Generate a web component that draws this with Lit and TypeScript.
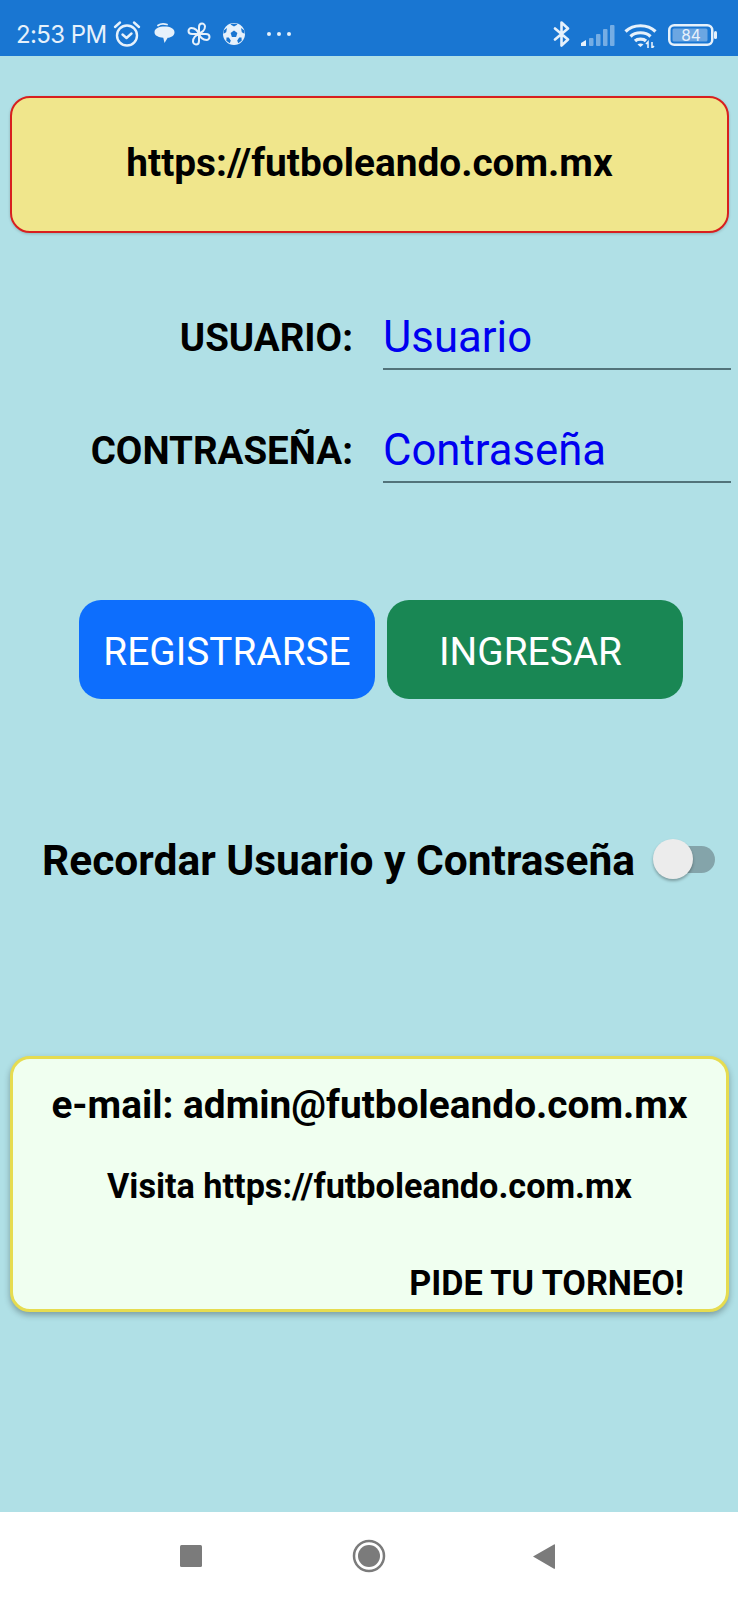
import { html, LitElement, css } from 'lit';
import { customElement } from 'lit/decorators.js';

@customElement(`app-root`)
export class AppRoot extends LitElement {
  static styles = css`
    :host {
      display: flex;
      flex-direction: column;
      width: 738px;
      height: 1600px;
      overflow: hidden;
      background: #b0e0e6;
      font-family: Roboto, sans-serif;
      color: #000;
    }
    .status {
      height: 56px;
      flex: none;
      background: #1976d2;
      color: #e6f1fb;
      display: flex;
      align-items: center;
      box-sizing: border-box;
      padding: 12px 21px 0 16px;
    }
    .status svg { display: block; flex: none; }
    .time { font-family: Inter, sans-serif; font-size: 24px; letter-spacing: -0.6px; width: 97px; white-space: nowrap; }
    .ic-chat { margin-left: 13px; }
    .ic-wheel { margin-left: 12px; }
    .ic-ball { margin-left: 12px; }
    .ic-dots { margin-left: 21px; }
    .spacer { flex: 1; }
    .ic-signal { margin-left: 10px; margin-top: 2px; }
    .ic-wifi { margin-left: 9px; margin-top: 2px; }
    .ic-batt { margin-left: 11px; margin-top: 2px; }
    .content { flex: 1; display: flex; flex-direction: column; padding: 40px 9px 0 10px; }
    .banner {
      height: 137px;
      box-sizing: border-box;
      background: #f0e68c;
      border: 2px solid #d81f1f;
      border-radius: 20px;
      padding-bottom: 4px;
      display: flex;
      align-items: center;
      justify-content: center;
      font-size: 38.8px;
      font-weight: 700;
      box-shadow: 0 1px 3px rgba(0, 0, 0, 0.2);
    }
    .row { display: flex; height: 77px; }
    .row.first { margin-top: 60px; }
    .row.second { margin-top: 36px; }
    .row label {
      flex: none;
      width: 343px;
      text-align: right;
      font-size: 38.5px;
      font-weight: 700;
      padding-top: 13px;
      line-height: 64px;
    }
    .field {
      flex: none;
      margin-left: 30px;
      width: 348px;
      box-sizing: border-box;
      height: 77px;
      padding-top: 13px;
      border-bottom: 2px solid #52737a;
      color: #0000f0;
      font-size: 43.7px;
      line-height: 62px;
    }
    .buttons { display: flex; gap: 12px; margin-top: 117px; margin-left: 69px; }
    .btn {
      width: 296px;
      height: 99px;
      box-sizing: border-box;
      padding-top: 4px;
      border-radius: 22px;
      color: #fff;
      font-size: 38.8px;
      display: flex;
      align-items: center;
      justify-content: center;
    }
    .btn.blue { background: #0d6efd; }
    .btn.green { background: #198754; padding-right: 9px; }
    .remember { display: flex; align-items: center; margin-top: 136px; padding-left: 32px; height: 48px; }
    .remember span { font-size: 42.5px; font-weight: 700; width: 611px; white-space: nowrap; padding-top: 2px; }
    .toggle { position: relative; width: 62px; height: 40px; flex: none; }
    .track { position: absolute; left: 10px; right: 0; top: 7px; height: 27px; border-radius: 14px; background: #84a4aa; }
    .thumb {
      position: absolute;
      left: 0;
      top: 0;
      width: 40px;
      height: 40px;
      border-radius: 50%;
      background: #ececec;
      box-shadow: 0 2px 3px rgba(0, 0, 0, 0.3);
    }
    .card {
      margin-top: 173px;
      height: 256px;
      box-sizing: border-box;
      background: #f0fff0;
      border: 3px solid #e6dc50;
      border-radius: 20px;
      box-shadow: 0 3px 6px rgba(0, 0, 0, 0.3);
      display: flex;
      flex-direction: column;
      align-items: center;
      font-weight: 700;
    }
    .mail { font-size: 38.8px; margin-top: 22px; line-height: 48px; }
    .visit { font-size: 34.2px; margin-top: 35px; line-height: 44px; }
    .ask { font-size: 34.2px; align-self: flex-end; margin: 53px 42px 0 0; line-height: 44px; }
    .nav {
      height: 88px;
      flex: none;
      background: #fff;
      display: flex;
      align-items: center;
      justify-content: center;
      padding-left: 6px;
    }
    .nav svg { display: block; }
  `;

  render() {
    return html`
      <div class="status">
        <div class="time">2:53 PM</div>
        <svg width="28" height="28" viewBox="0 0 28 28" fill="none" stroke="currentColor" stroke-width="2.4" stroke-linecap="round" stroke-linejoin="round">
          <circle cx="14" cy="15.5" r="10" />
          <path d="M9.500 14.500l4 3.500 5-4.500M2 7l5-4.500M26 7l-5-4.500" />
        </svg>
        <svg class="ic-chat" width="21" height="22" viewBox="0 0 21 22" fill="currentColor">
          <path d="M4 2.500C6 1 10 .7 13 1.500" fill="none" stroke="currentColor" stroke-width="1.800" stroke-linecap="round" />
          <path d="M10.500 3.500c5.500 0 10 1.800 10 5.700 0 3.400-3.300 5.300-6.800 5.600L10.500 20l-1.200-5.300C4.500 14.300.5 12.600.5 9.200c0-3.900 4.500-5.700 10-5.700z" />
        </svg>
        <svg class="ic-wheel" width="24" height="24" viewBox="0 0 24 24" fill="none" stroke="currentColor" stroke-width="2" stroke-linejoin="round">
          <path d="M12 11.500V5c0-2.200 1.500-3.500 3-3.500s3 1.300 3 3c0 3.500-3 6.500-6 6.500z" />
          <path d="M12.500 12H19c2.200 0 3.500 1.500 3.500 3s-1.300 3-3 3c-3.500 0-7-3-7-6z" />
          <path d="M12 12.500V19c0 2.200-1.500 3.500-3 3.500s-3-1.300-3-3c0-3.500 3-7 6-7z" />
          <path d="M11.500 12H5c-2.200 0-3.500-1.500-3.500-3S2.800 6 4.500 6c3.500 0 7 3 7 6z" />
        </svg>
        <svg class="ic-ball" width="22" height="22" viewBox="0 0 22 22">
          <circle cx="11" cy="11" r="11" fill="currentColor" />
          <g fill="#1976d2">
            <path d="M11 7.500l3.400 2.400-1.300 4h-4.200l-1.300-4z" />
            <path d="M7.500 1.600l3.500 1.800 3.500-1.800-1.200-.9h-4.600zM18 5l.8 4.200 2.700 1.600V7.500zM4 5l-.8 4.200L.5 10.800V7.500zM3.500 14.500l-.2 3.200 3.500 2.500 1-2.700-2-3zM18.500 14.500l.2 3.200-3.500 2.500-1-2.700 2-3z" />
          </g>
        </svg>
        <svg class="ic-dots" width="26" height="6" viewBox="0 0 26 6" fill="currentColor">
          <circle cx="3" cy="3" r="2" /><circle cx="13" cy="3" r="2" /><circle cx="23" cy="3" r="2" />
        </svg>
        <div class="spacer"></div>
        <svg width="18" height="26" viewBox="0 0 18 26" fill="none" stroke="currentColor" stroke-width="2.6" stroke-linejoin="round" stroke-linecap="round">
          <path d="M2 7.500l13 11-6.500 6V1.500l6.500 6-13 11" />
        </svg>
        <svg class="ic-signal" width="34" height="21" viewBox="0 0 34 21" fill="currentColor">
          <path d="M0 21v-3l5-3v6z" />
          <g opacity="0.45">
            <rect x="8" y="13" width="4.500" height="8" rx="1" />
            <rect x="15" y="9" width="4.500" height="12" rx="1" />
            <rect x="22" y="4" width="4.500" height="17" rx="1" />
            <rect x="29" y="0" width="4.500" height="21" rx="1" />
          </g>
        </svg>
        <svg class="ic-wifi" width="33" height="25" viewBox="0 0 33 25" fill="none" stroke="currentColor" stroke-width="3.200">
          <path d="M1.500 8.500C9.500 .8 23.500 .8 31.500 8.500" />
          <path d="M6.500 13.500c5-5 15-5 20 0" />
          <path d="M11 18c2.500-2.500 8.500-2.500 11 0" />
          <path d="M13.500 21.500c1.500-1.500 4.500-1.500 6 0L16.500 24z" fill="currentColor" stroke="none" />
          <path d="M24 25v-6l-2 2M28 19v6l2-2" stroke-width="1.600" />
        </svg>
        <svg class="ic-batt" width="49" height="22" viewBox="0 0 49 22">
          <rect x="1.250" y="1.250" width="43" height="19.500" rx="5" fill="none" stroke="currentColor" stroke-width="2.500" />
          <rect x="4.500" y="4.500" width="35" height="13" rx="1.500" fill="currentColor" opacity="0.4" />
          <rect x="46" y="7" width="3" height="8" rx="1.500" fill="currentColor" />
          <text x="23" y="16.500" text-anchor="middle" font-family="Inter, sans-serif" font-size="15.500" fill="currentColor">84</text>
        </svg>
      </div>

      <div class="content">
        <div class="banner">https://futboleando.com.mx</div>

        <div class="row first">
          <label>USUARIO:</label>
          <div class="field">Usuario</div>
        </div>
        <div class="row second">
          <label>CONTRASEÑA:</label>
          <div class="field">Contraseña</div>
        </div>

        <div class="buttons">
          <div class="btn blue">REGISTRARSE</div>
          <div class="btn green">INGRESAR</div>
        </div>

        <div class="remember">
          <span>Recordar Usuario y Contraseña</span>
          <div class="toggle"><div class="track"></div><div class="thumb"></div></div>
        </div>

        <div class="card">
          <div class="mail">e-mail: admin@futboleando.com.mx</div>
          <div class="visit">Visita https://futboleando.com.mx</div>
          <div class="ask">PIDE TU TORNEO!</div>
        </div>
      </div>

      <div class="nav">
        <svg width="388" height="34" viewBox="0 0 388 34" fill="#7b7b7b">
          <rect x="2" y="6" width="22" height="22" rx="1.500" />
          <circle cx="191" cy="17" r="15" fill="none" stroke="#7b7b7b" stroke-width="2.500" />
          <circle cx="191" cy="17" r="11" />
          <path d="M355 17.500L376 5.500c.6-.3 1-.1 1 .6v23c0 .7-.5 1-1 .6z" />
        </svg>
      </div>
    `;
  }
}

declare global {
  interface HTMLElementTagNameMap {
    'app-root': AppRoot;
  }
}
